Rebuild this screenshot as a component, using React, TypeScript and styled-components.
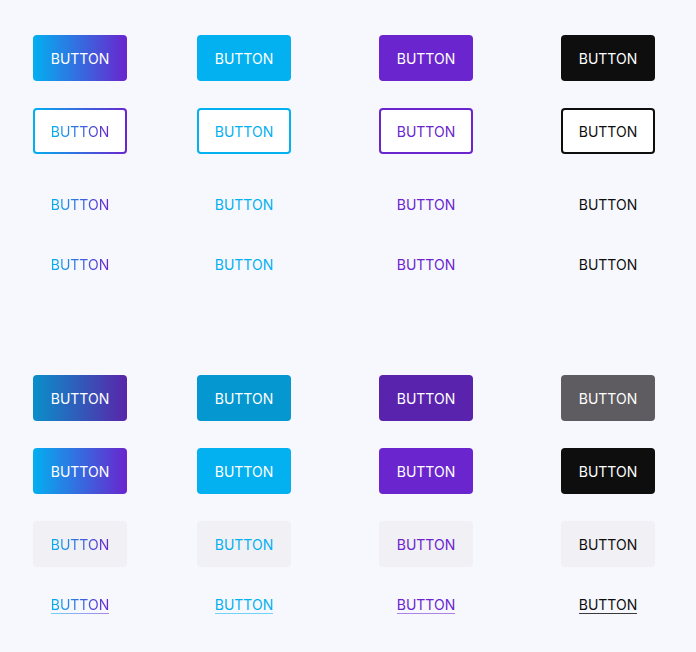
import React from 'react';
import styled, { createGlobalStyle, css } from 'styled-components';

const GlobalStyle = createGlobalStyle`
  html, body {
    margin: 0;
    padding: 0;
    background: #f7f8fe;
  }
  body {
    font-family: Inter, "Open Sans", Roboto, sans-serif;
  }
`;

type Tone = 'gradient' | 'cyan' | 'purple' | 'black';
type Kind = 'solid' | 'outline' | 'ghost' | 'dark' | 'light' | 'link';

const base: Record<Tone, string> = {
  gradient: 'linear-gradient(90deg, #03b0f0 0%, #6a25ce 100%)',
  cyan: '#03b0f0',
  purple: '#6a25ce',
  black: '#0e0e0e',
};

const dark: Record<Tone, string> = {
  gradient: 'linear-gradient(90deg, #0a8fc9 0%, #5925aa 100%)',
  cyan: '#0597cf',
  purple: '#5a23ae',
  black: '#5e5c60',
};

const textTone = (tone: Tone) =>
  tone === 'gradient'
    ? css`
        background: ${base.gradient};
        -webkit-background-clip: text;
        background-clip: text;
        color: transparent;
      `
    : css`
        color: ${base[tone]};
      `;

const Page = styled.div`
  display: flex;
  flex-direction: column;
  gap: 88px;
  padding: 35px 0 0 33px;
`;

const Board = styled.div`
  display: grid;
  grid-template-columns: 164px 182px 182px 94px;
  grid-template-rows: 73px 73px 60px 46px;
  align-items: start;
  justify-items: start;
`;

const Btn = styled.button<{ $tone: Tone; $kind: Kind }>`
  box-sizing: border-box;
  width: 94px;
  height: 46px;
  border: none;
  border-radius: 4px;
  padding: 0;
  display: flex;
  align-items: center;
  justify-content: center;
  font-family: inherit;
  font-size: 14px;
  font-weight: 400;
  letter-spacing: 0;
  text-transform: uppercase;
  cursor: pointer;
  background: transparent;
  color: #fff;

  ${(p) => p.$kind === 'solid' && css`background: ${base[p.$tone]};`}
  ${(p) => p.$kind === 'dark' && css`background: ${dark[p.$tone]};`}
  ${(p) => p.$kind === 'light' && css`background: #f1f0f5;`}
  ${(p) =>
    p.$kind === 'outline' &&
    css`
      border: 2px solid transparent;
      background: linear-gradient(#fff, #fff) padding-box, ${p.$tone === 'gradient' ? base.gradient : `linear-gradient(${base[p.$tone]}, ${base[p.$tone]})`} border-box;
    `}
`;

const Label = styled.span<{ $tone: Tone; $kind: Kind; $underline?: boolean }>`
  position: relative;
  display: inline-block;
  line-height: 17px;
  ${(p) => (p.$kind === 'solid' || p.$kind === 'dark' ? css`color: #fff;` : textTone(p.$tone))}
  ${(p) =>
    p.$underline &&
    css`
      &::after {
        content: '';
        position: absolute;
        left: 0;
        right: 0;
        bottom: -1px;
        height: 1px;
        background: ${p.$tone === 'black' ? '#3a3a3a' : base[p.$tone]};
        opacity: ${p.$tone === 'black' ? 1 : 0.55};
      }
    `}
`;

const tones: Tone[] = ['gradient', 'cyan', 'purple', 'black'];

const groups: Kind[][] = [
  ['solid', 'outline', 'ghost', 'ghost'],
  ['dark', 'solid', 'light', 'link'],
];

export default function App() {
  return (
    <>
      <GlobalStyle />
      <Page>
        {groups.map((rows, g) => (
          <Board key={g}>
            {rows.map((kind, r) =>
              tones.map((tone) => (
                <Btn key={`${r}-${tone}`} $tone={tone} $kind={kind}>
                  <Label $tone={tone} $kind={kind} $underline={kind === 'link'}>
                    Button
                  </Label>
                </Btn>
              ))
            )}
          </Board>
        ))}
      </Page>
    </>
  );
}
